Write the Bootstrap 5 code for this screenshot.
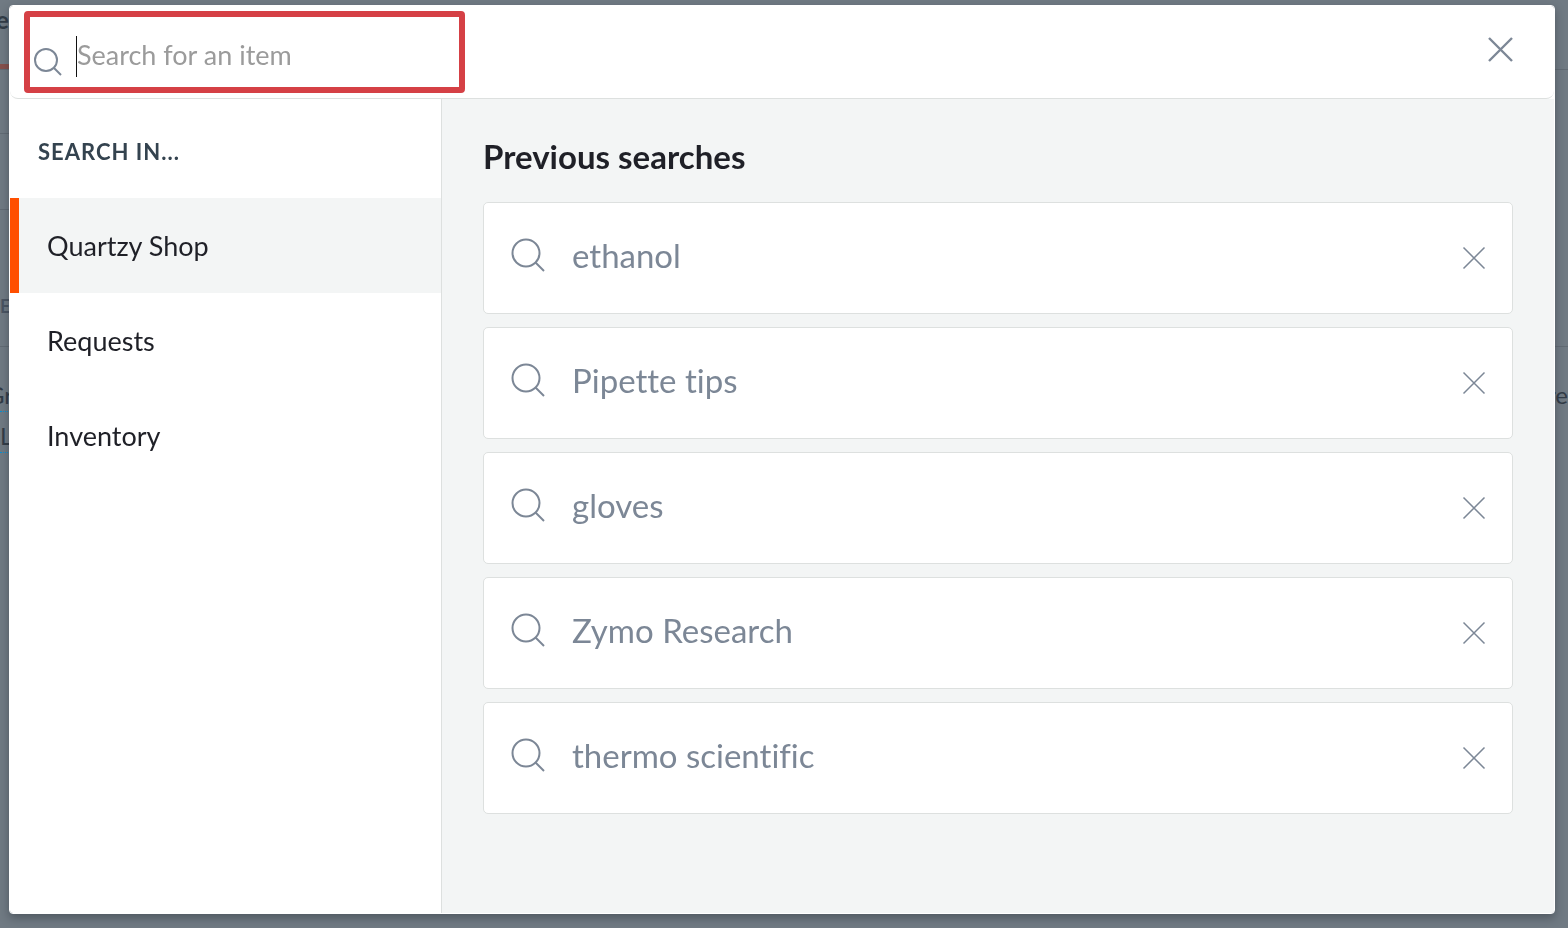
<!DOCTYPE html>
<html lang="en">
<head>
<meta charset="utf-8">
<meta name="viewport" content="width=device-width, initial-scale=1">
<title>Quartzy search</title>
<link rel="stylesheet" href="https://cdn.jsdelivr.net/npm/bootstrap@5.3.0/dist/css/bootstrap.min.css">
<style>
  body { font-family: "Lato", "Open Sans", sans-serif; font-variant-ligatures: none; color: #1f2027; background: #707a83; overflow: hidden; }
  svg { fill: none; stroke: #7c8796; flex: none; display: block; }

  /* dimmed page behind the dialog */
  .dimmed { color: #323c47; font-size: 24px; line-height: 40px; min-height: 100vh; }
  .dimmed .band { border-bottom: 1px solid #626b74; overflow: hidden; }
  .band-title { height: 70px; font-weight: 700; }
  .band-title span { display: block; height: 64px; margin-left: -4px; }
  .band-title i { display: block; width: 40px; height: 5px; background: #87504c; }
  .band-tools { height: 64px; }
  .band-filter { height: 76px; }
  .band-head { height: 137px; padding-top: 76px; font-size: 18px; font-weight: 700; color: #4a5462; }
  .band-row { padding-top: 28px; }
  .band-row a { display: block; width: 40px; height: 37px; color: inherit; text-decoration: none; border-bottom: 1px dotted #0a8fd0; margin-bottom: 4px; }
  .band-row .cut { text-indent: -13px; }

  /* dialog */
  .search-modal { padding: 5px 13px 14px 9px; overflow: hidden; }
  .search-modal .modal-dialog { max-width: none; margin: 0; min-height: 100%; display: flex; }
  .search-modal .modal-content { border: 1px solid #fff; border-radius: 4px; overflow: hidden; }
  .search-shell { border-radius: 4px; box-shadow: 0 4px 10px rgba(30, 38, 46, .4); flex: 1; display: flex; }
  .search-head { border-bottom: 1px solid #dde0df; border-radius: 0 0 8px 8px; padding: 5px 41px 5px 14px; }
  .search-box { border: 6px solid #d54045; border-radius: 4px; width: 441px; height: 82px; padding: 19px 0 0 4px; }
  .search-box svg { margin-top: 12px; }
  .caret { width: 1px; height: 41px; background: #111; margin-left: 14px; }
  .search-box input { height: 38px; font-size: 27px; line-height: 38px; padding: 0; border: 0; box-shadow: none !important; }
  .search-box input::placeholder { color: #9b9b9b; opacity: 1; }
  .search-head .btn { padding-bottom: 6px; }

  .scope { width: 432px; border-right: 1px solid #dde0df; }
  .scope h2 { font-size: 22px; line-height: 28px; font-weight: 700; letter-spacing: 1px; color: #34434f; margin: 0; padding: 39px 28px 32px; }
  .scope .nav-link { color: #1f2027; font-size: 27px; line-height: 39px; padding: 28px; border-left: 9px solid transparent; border-radius: 0; }
  .scope .nav-link.active { background: #f3f5f5; border-left-color: #ff4f00; }

  .results { background: #f3f5f5; padding: 37px 41px; }
  .results h1 { font-size: 33px; line-height: 40px; font-weight: 700; margin: 0 0 26px; }
  .past { gap: 13px; }
  .past li { background: #fff; border: 1px solid #dde0df; border-radius: 5px; min-height: 112px; padding: 0 26px 0 27px; }
  .past a { color: #7c8796; font-size: 33px; line-height: 40px; gap: 27px; padding-bottom: 7px; }
</style>
</head>
<body>
<div class="dimmed d-flex justify-content-between" aria-hidden="true">
  <div>
    <div class="band band-title"><span>es</span><i></i></div>
    <div class="band band-tools"></div>
    <div class="band band-filter"></div>
    <div class="band band-head">E</div>
    <div class="band-row"><a href="#" class="cut">Gr</a><a href="#">L</a></div>
  </div>
  <div>
    <div class="band band-title"></div>
    <div class="band band-tools border-0"></div>
    <div class="band band-filter border-0"></div>
    <div class="band band-head"></div>
    <div class="band-row">re</div>
  </div>
</div>

<div class="modal d-block search-modal" role="dialog" aria-modal="true" aria-label="Search">
  <div class="modal-dialog">
    <div class="search-shell">
      <div class="modal-content">
        <header class="search-head d-flex justify-content-between align-items-center">
          <form class="search-box d-flex align-items-start">
            <svg width="28" height="28" viewBox="0 0 28 28" stroke-width="2"><circle cx="12" cy="12" r="11"/><path d="M19.500 19.500 27 27"/></svg>
            <span class="caret"></span>
            <label class="visually-hidden" for="q">Search for an item</label>
            <input id="q" type="text" class="form-control" placeholder="Search for an item">
          </form>
          <button type="button" class="btn px-0 pt-0 border-0" aria-label="Close">
            <svg width="25" height="25" viewBox="0 0 25 25" stroke-width="2.400"><path d="M1 1 24 24M24 1 1 24"/></svg>
          </button>
        </header>
        <div class="d-flex flex-grow-1">
          <nav class="scope flex-shrink-0">
            <h2>SEARCH IN...</h2>
            <div class="nav flex-column">
              <a class="nav-link active" href="#">Quartzy Shop</a>
              <a class="nav-link" href="#">Requests</a>
              <a class="nav-link" href="#">Inventory</a>
            </div>
          </nav>
          <main class="results flex-grow-1">
            <h1>Previous searches</h1>
            <ul class="past list-unstyled d-flex flex-column mb-0" id="past"></ul>
          </main>
        </div>
      </div>
    </div>
  </div>
</div>
<script src="https://cdn.jsdelivr.net/npm/bootstrap@5.3.0/dist/js/bootstrap.bundle.min.js"></script>
<script>
  const terms = ["ethanol", "Pipette tips", "gloves", "Zymo Research", "thermo scientific"];
  document.getElementById("past").innerHTML = terms.map(t => `
    <li class="d-flex justify-content-between align-items-center">
      <a href="#" class="d-flex align-items-center text-decoration-none">
        <svg width="34" height="34" viewBox="0 0 34 34" stroke-width="2"><circle cx="15" cy="15" r="13.500"/><path d="M24.500 24.500 33 33"/></svg>
        ${t}
      </a>
      <button type="button" class="btn p-0 border-0" aria-label="Remove ${t}">
        <svg width="24" height="24" viewBox="0 0 24 24" stroke-width="1.500"><path d="M1.500 1.500 22.500 22.500M22.500 1.500 1.500 22.500"/></svg>
      </button>
    </li>`).join("");
</script>
</body>
</html>
